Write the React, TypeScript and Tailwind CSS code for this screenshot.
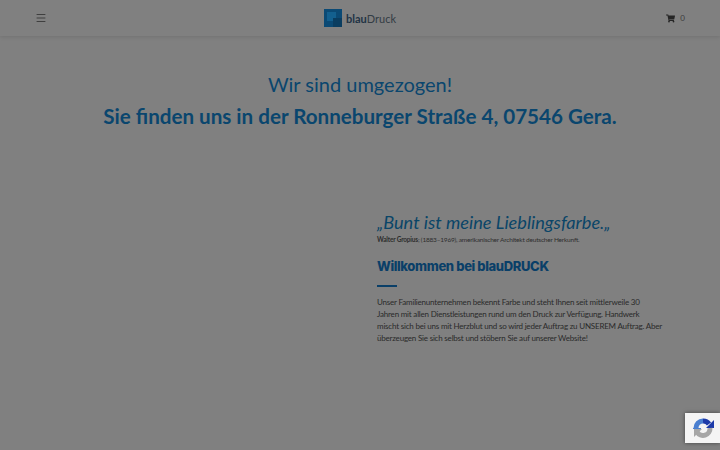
import { Menu } from "lucide-react";

const sans = "font-['Lato','Noto_Sans',sans-serif]";

function Logo() {
  return (
    <div className="flex items-center gap-[4px]">
      <svg width="18" height="18" viewBox="0 0 18 18">
        <rect width="18" height="18" fill="#0b4a75" />
        <rect x="3" y="3" width="9" height="9" fill="#13608f" />
        <rect x="9" y="9" width="9" height="9" fill="#0a3d60" />
      </svg>
      <span className="text-[11px] leading-none text-[#333c44]">
        <span className="font-bold text-[#1f3345]">blau</span>Druck
      </span>
    </div>
  );
}

function Cart() {
  return (
    <svg width="9" height="9" viewBox="0 0 576 512" fill="#252525">
      <path d="M528 301 575 93c3-15-8-29-23-29H159l-9-45C148 8 138 0 126 0H24C11 0 0 11 0 24v16c0 13 11 24 24 24h70l70 343c-17 10-28 28-28 49 0 31 25 56 56 56s56-25 56-56c0-16-6-30-17-40h210c-11 10-17 24-17 40 0 31 25 56 56 56s56-25 56-56c0-22-13-41-31-50l6-25c3-15-8-29-23-29H215l-7-32h296c11 0 21-8 24-19z" />
    </svg>
  );
}

function Recaptcha() {
  return (
    <div className="fixed bottom-[7px] right-0 flex h-[30px] w-[35px] items-center justify-center bg-[#f4f4f4] shadow-[0_0_4px_rgba(0,0,0,0.5)]">
      <svg width="22" height="22" viewBox="0 0 22 22" fill="none">
        <path d="M4 11a7 7 0 0 1 7-7" stroke="#4a7fd0" strokeWidth="5" />
        <path d="M11 4a7 7 0 0 1 6 3" stroke="#1c3aa9" strokeWidth="5" />
        <path d="M14 11h8V3z" fill="#1c3aa9" />
        <path d="M18 11a7 7 0 0 1-13 4" stroke="#a6a6a6" strokeWidth="5" />
        <path d="M1 11h8v1H1z" fill="#4a7fd0" />
        <path d="M2 20v-8h8z" fill="#a6a6a6" />
      </svg>
    </div>
  );
}

export default function App() {
  return (
    <div className={`${sans} h-[450px] w-[720px] overflow-hidden bg-[#808080]`}>
      <header className="grid h-[36px] grid-cols-3 items-center bg-[#808080] pl-[35px] pr-[35px] shadow-[0_1px_4px_rgba(0,0,0,0.12)]">
        <Menu size={12} strokeWidth={1.5} className="text-[#2a2a2a]" />
        <div className="flex justify-center">
          <Logo />
        </div>
        <div className="flex items-center justify-end gap-[5px] text-[8px] text-[#3c3c3c]">
          <Cart />
          <span>0</span>
        </div>
      </header>

      <section className="flex flex-col items-center pt-[35px] text-[#0a466e]">
        <h1 className="text-[20px] leading-[26px] font-normal">Wir sind umgezogen!</h1>
        <h2 className="mt-[4px] text-[20.6px] leading-[30px] font-bold">
          Sie finden uns in der Ronneburger Straße 4, 07546 Gera.
        </h2>
      </section>

      <section className="grid grid-cols-[377px_282px] pt-[79px]">
        <div />
        <div>
          <p className="text-[18.2px] leading-[24px] text-[#0a4568] italic">„Bunt ist meine Lieblingsfarbe.„</p>
          <p className="mt-[1px] text-[6.5px] leading-[10px] tracking-[-0.2px] text-[#2e2e2e]">
            <b>Walter Gropius</b>; (1883–1969), amerikanischer Architekt deutscher Herkunft.
          </p>
          <h3 className="mt-[12px] font-['Inter',sans-serif] text-[13px] leading-[18px] font-extrabold tracking-[-0.37px] text-[#0a3f68]">
            Willkommen bei blauDRUCK
          </h3>
          <div className="mt-[10px] h-[2px] w-[20px] bg-[#0a3f68]" />
          <p className="mt-[9px] whitespace-nowrap text-[8px] leading-[12px] tracking-[-0.2px] text-[#2a2a2a]">
            Unser Familienunternehmen bekennt Farbe und steht Ihnen seit mittlerweile 30
            <br />
            Jahren mit allen Dienstleistungen rund um den Druck zur Verfügung. Handwerk
            <br />
            mischt sich bei uns mit Herzblut und so wird jeder Auftrag zu UNSEREM Auftrag. Aber
            <br />
            überzeugen Sie sich selbst und stöbern Sie auf unserer Website!
          </p>
        </div>
      </section>
      <Recaptcha />
    </div>
  );
}
